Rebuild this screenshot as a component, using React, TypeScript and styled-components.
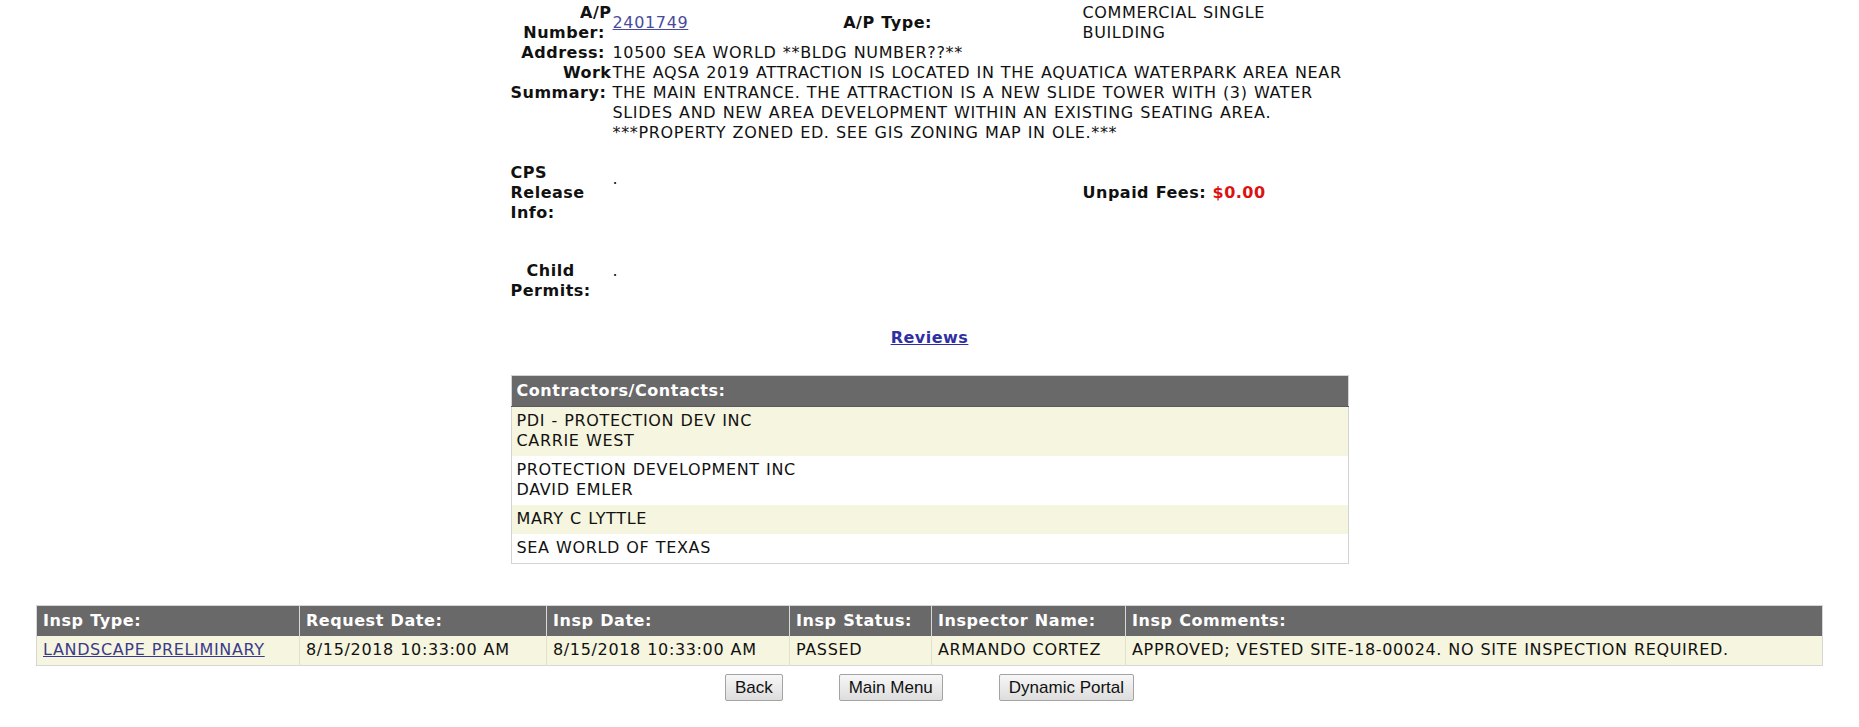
import React from "react";
import styled, { createGlobalStyle } from "styled-components";

const GlobalStyle = createGlobalStyle`
  html, body {
    margin: 0;
    padding: 0;
    background: #ffffff;
  }
  body {
    font-family: "DejaVu Sans", Verdana, sans-serif;
    font-size: 16px;
    line-height: 20px;
    letter-spacing: 0.65px;
    word-spacing: 0.6px;
    color: #111111;
  }
`;

const Page = styled.div`
  padding-top: 3px;
  display: flex;
  flex-direction: column;
  align-items: center;
`;

const Summary = styled.section`
  width: 838px;
  display: grid;
  grid-template-columns: 101px 225px 245px 1fr;
`;

const Label = styled.div<{ $align?: "left" | "right" | "center"; $shrink?: boolean; $valign?: "start" | "center" }>`
  font-weight: bold;
  letter-spacing: 0.5px;
  text-align: ${(p) => p.$align ?? "right"};
  align-self: ${(p) => p.$valign ?? "start"};
  ${(p) => (p.$shrink ? "width: min-content;" : "")}
`;

const Value = styled.div<{ $span?: number; $valign?: "start" | "center"; $top?: number }>`
  grid-column: span ${(p) => p.$span ?? 1};
  align-self: ${(p) => p.$valign ?? "start"};
  padding-left: 1px;
  padding-top: ${(p) => p.$top ?? 0}px;
`;

const Spacer = styled.div<{ $h: number }>`
  grid-column: 1 / -1;
  height: ${(p) => p.$h}px;
`;

const PermitLink = styled.a`
  color: #4a4a9c;
  text-decoration: underline;
`;

const FeeLabel = styled.b`
  letter-spacing: 0.5px;
`;

const Money = styled.span`
  color: #dd1111;
  font-weight: bold;
  letter-spacing: 0.5px;
`;

const ReviewsLink = styled.a`
  margin-top: 27px;
  font-weight: bold;
  letter-spacing: 0.5px;
  color: #2f2fa3;
  text-decoration: underline;
`;

const ContactsTable = styled.table`
  margin-top: 27px;
  width: 838px;
  border-collapse: collapse;
  border: 1px solid #d4d4d4;
`;

const HeadCell = styled.th`
  background: #6a696a;
  color: #ffffff;
  font-weight: bold;
  letter-spacing: 0.55px;
  text-align: left;
  padding: 5px 5px;
  border-bottom: 1px solid #5a5a5a;
`;

const ContactRow = styled.tr<{ $tint: boolean }>`
  background: ${(p) => (p.$tint ? "#f6f5df" : "#ffffff")};
`;

const ContactCell = styled.td`
  padding: 4px 5px 5px;
`;

const InspTable = styled.table`
  margin-top: 41px;
  width: 1786px;
  border-collapse: collapse;
  table-layout: fixed;
  border: 1px solid #d6d6d6;
`;

const InspHead = styled(HeadCell)`
  padding: 5px 6px;
  border-left: 1px solid #d8d8d8;
  border-bottom: none;
  &:first-child {
    border-left: none;
  }
`;

const InspCell = styled.td`
  background: #f6f5df;
  padding: 4px 6px 5px;
  border-left: 1px solid #e2e1cc;
  white-space: nowrap;
  overflow: hidden;
  &:first-child {
    border-left: none;
  }
`;

const InspLink = styled.a`
  color: #3b3b8c;
  text-decoration: underline;
`;

const ButtonBar = styled.div`
  margin-top: 8px;
  display: flex;
  justify-content: center;
  gap: 56px;
`;

const Button = styled.button`
  height: 27px;
  padding: 0 9px;
  font-family: "Liberation Sans", Arial, sans-serif;
  font-size: 17px;
  letter-spacing: 0;
  word-spacing: 0;
  color: #111111;
  background: linear-gradient(#f7f7f7, #dddddd);
  border: 1px solid #a3a3a3;
  border-radius: 2px;
  cursor: pointer;
`;

const contacts = [
  ["PDI - PROTECTION DEV INC", "CARRIE WEST"],
  ["PROTECTION DEVELOPMENT INC", "DAVID EMLER"],
  ["MARY C LYTTLE"],
  ["SEA WORLD OF TEXAS"],
];

const inspColumns = [
  { title: "Insp Type:", w: 263 },
  { title: "Request Date:", w: 247 },
  { title: "Insp Date:", w: 243 },
  { title: "Insp Status:", w: 142 },
  { title: "Inspector Name:", w: 194 },
  { title: "Insp Comments:", w: 697 },
];

export default function App() {
  return (
    <>
      <GlobalStyle />
      <Page>
        <Summary>
          <Label>A/P Number:&nbsp;</Label>
          <Value $valign="center">
            <PermitLink href="#">2401749</PermitLink>
          </Value>
          <Label $align="left" $valign="center">
            &nbsp;A/P Type:
          </Label>
          <Value>COMMERCIAL SINGLE BUILDING</Value>

          <Label>Address:&nbsp;</Label>
          <Value $span={3}>10500 SEA WORLD **BLDG NUMBER??**</Value>

          <Label>Work Summary:&nbsp;</Label>
          <Value $span={3}>
            THE AQSA 2019 ATTRACTION IS LOCATED IN THE AQUATICA WATERPARK AREA NEAR THE MAIN
            ENTRANCE. THE ATTRACTION IS A NEW SLIDE TOWER WITH (3) WATER SLIDES AND NEW AREA
            DEVELOPMENT WITHIN AN EXISTING SEATING AREA. ***PROPERTY ZONED ED. SEE GIS ZONING MAP
            IN OLE.***
          </Value>

          <Spacer $h={20} />

          <Label $align="left">CPS Release Info:</Label>
          <Value $top={6}>.</Value>
          <Value />
          <Value $valign="center">
            <FeeLabel>Unpaid Fees:</FeeLabel> <Money>$0.00</Money>
          </Value>

          <Spacer $h={38} />

          <Label $align="center" $shrink>
            Child Permits:
          </Label>
          <Value>.</Value>
        </Summary>

        <ReviewsLink href="#">Reviews</ReviewsLink>

        <ContactsTable>
          <thead>
            <tr>
              <HeadCell>Contractors/Contacts:</HeadCell>
            </tr>
          </thead>
          <tbody>
            {contacts.map((lines, i) => (
              <ContactRow key={i} $tint={i % 2 === 0}>
                <ContactCell>
                  {lines.map((line, j) => (
                    <React.Fragment key={j}>
                      {j > 0 && <br />}
                      {line}
                    </React.Fragment>
                  ))}
                </ContactCell>
              </ContactRow>
            ))}
          </tbody>
        </ContactsTable>

        <InspTable>
          <colgroup>
            {inspColumns.map((c) => (
              <col key={c.title} style={{ width: c.w }} />
            ))}
          </colgroup>
          <thead>
            <tr>
              {inspColumns.map((c) => (
                <InspHead key={c.title}>{c.title}</InspHead>
              ))}
            </tr>
          </thead>
          <tbody>
            <tr>
              <InspCell>
                <InspLink href="#">LANDSCAPE PRELIMINARY</InspLink>
              </InspCell>
              <InspCell>8/15/2018 10:33:00 AM</InspCell>
              <InspCell>8/15/2018 10:33:00 AM</InspCell>
              <InspCell>PASSED</InspCell>
              <InspCell>ARMANDO CORTEZ</InspCell>
              <InspCell>APPROVED; VESTED SITE-18-00024. NO SITE INSPECTION REQUIRED.</InspCell>
            </tr>
          </tbody>
        </InspTable>

        <ButtonBar>
          <Button type="button">Back</Button>
          <Button type="button">Main Menu</Button>
          <Button type="button">Dynamic Portal</Button>
        </ButtonBar>
      </Page>
    </>
  );
}
